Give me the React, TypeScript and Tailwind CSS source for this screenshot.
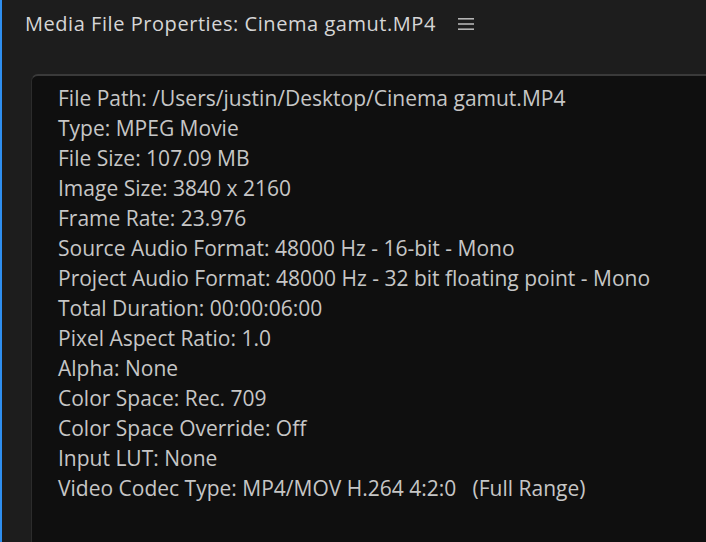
const PROPS = [
  "File Path: /Users/justin/Desktop/Cinema gamut.MP4",
  "Type: MPEG Movie",
  "File Size: 107.09 MB",
  "Image Size: 3840 x 2160",
  "Frame Rate: 23.976",
  "Source Audio Format: 48000 Hz - 16-bit - Mono",
  "Project Audio Format: 48000 Hz - 32 bit floating point - Mono",
  "Total Duration: 00:00:06:00",
  "Pixel Aspect Ratio: 1.0",
  "Alpha: None",
  "Color Space: Rec. 709",
  "Color Space Override: Off",
  "Input LUT: None",
  "Video Codec Type: MP4/MOV H.264 4:2:0\u00a0\u00a0 (Full Range)",
];

function MenuIcon() {
  return (
    <svg width="16" height="14" viewBox="0 0 16 14" className="text-[#b4b4b4]">
      <rect x="0" y="1" width="16" height="1.6" fill="currentColor" />
      <rect x="0" y="6.2" width="16" height="1.6" fill="currentColor" />
      <rect x="0" y="11.4" width="16" height="1.6" fill="currentColor" />
    </svg>
  );
}

export default function App() {
  return (
    <div className="h-screen w-full overflow-hidden bg-[#1d1d1d] font-['Open_Sans',sans-serif] border-l-2 border-[#2f8ff0] flex flex-col">
      <header className="h-[48px] shrink-0 flex items-center pl-[23px] gap-[22px]">
        <h1 className="text-[20px] tracking-[0.55px] text-[#d6d6d6] leading-none">
          Media File Properties: Cinema gamut.MP4
        </h1>
        <MenuIcon />
      </header>
      <div className="mt-[26px] ml-[29px] flex-1 bg-[#0f0f0f] border-t-2 border-l border-t-[#3a3a3a] border-l-[#2c2c2c] rounded-tl-[7px] pt-[7px] pl-[26px]">
        <ul className="flex flex-col">
          {PROPS.map((p) => (
            <li key={p} className="text-[21px] leading-[30px] text-[#c6c6c6] whitespace-pre">
              {p}
            </li>
          ))}
        </ul>
      </div>
    </div>
  );
}
